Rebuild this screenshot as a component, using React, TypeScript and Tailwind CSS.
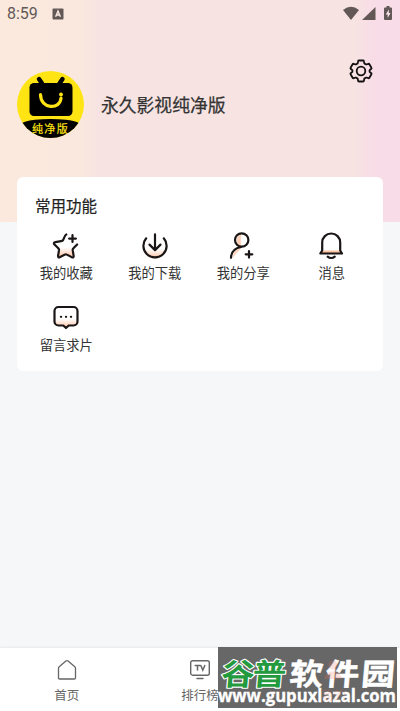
import type { ReactNode } from "react"

const ink = "#1a1616"

const StatusBar = () => (
  <div className="flex h-7 items-center justify-between pl-[7px] pr-[7px] text-[#625856]">
    <div className="flex items-center">
      <span className="w-[45px] font-['Roboto'] text-[16px] leading-7">8:59</span>
      <svg width="12" height="12" viewBox="0 0 12 12">
        <rect x="0.5" y="0.5" width="11" height="11" rx="1" fill="#625856" />
        <path d="M3.6 8.8 6 3l2.4 5.8M4.4 7h3.2" fill="none" stroke="#fbeae2" strokeWidth="1.4" />
      </svg>
    </div>
    <svg width="50" height="16" viewBox="0 0 50 16" fill="#625856">
      <path d="M0 4Q8 -2.4 16 4L8 14Z" />
      <path d="M19 14 32.5 1V14Z" />
      <path d="M43.5 0h3v1.5H48a1 1 0 0 1 1 1V13a1 1 0 0 1-1 1h-6a1 1 0 0 1-1-1V2.500a1 1 0 0 1 1-1h1.500Z" />
      <path d="M45.800 3.500 42.800 8.500h1.900V12l2.800-5h-1.700Z" fill="#fbe6ea" />
    </svg>
  </div>
)

const Avatar = () => (
  <svg width="67" height="67" viewBox="0 0 67 67">
    <defs>
      <clipPath id="avatar">
        <circle cx="33.500" cy="33.500" r="33.500" />
      </clipPath>
    </defs>
    <g clipPath="url(#avatar)">
      <rect width="67" height="67" fill="#ffe414" />
      <path d="m22 8 4 6M45.500 8l-4 6" stroke="#000" strokeWidth="4.500" strokeLinecap="round" />
      <rect x="12.500" y="12" width="43" height="33" rx="4.500" fill="#000" />
      <path d="M23.500 23.500c0 15 20 15.500 20.500 3.500" fill="none" stroke="#ffe414" strokeWidth="3.200" strokeLinecap="round" />
      <circle cx="44" cy="23.500" r="1.900" fill="#ffe414" />
      <path d="M0 54.500Q7 50 18 48.800Q33.500 47 49 48.800Q60 50 67 54.500V67H0Z" fill="#000" />
    </g>
    <text
      x="33.500"
      y="62"
      textAnchor="middle"
      fill="#ffe414"
      stroke="#ffe414"
      strokeWidth="0.200"
      className="font-['Noto_Sans_CJK_SC',sans-serif] text-[11px] tracking-[1.400px]"
    >
      纯净版
    </text>
  </svg>
)

const GearIcon = () => (
  <svg width="24" height="24" viewBox="0 0 24 24" fill="none" stroke="#151111" strokeWidth="1.800" strokeLinejoin="round">
    <path d="M9.900 1.500h4.200q.7 0 .8.700l.4 2.200 1.900 1.100 2.200-.7q.6-.2 1 .4l2 3.500q.4.600-.1 1.100L20.600 11.200v1.600l1.700 1.400q.5.500.1 1.100l-2 3.500q-.4.600-1 .4l-2.200-.7-1.900 1.100-.4 2.200q-.1.700-.8.700H9.900q-.7 0-.8-.7l-.4-2.200-1.900-1.100-2.200.7q-.6.200-1-.4l-2-3.500q-.4-.6.100-1.100l1.700-1.400v-1.600L1.700 9.800q-.5-.5-.1-1.100l2-3.500q.4-.6 1-.4l2.200.7 1.900-1.100.4-2.200q.1-.7.800-.7Z" />
    <circle cx="12" cy="12" r="4.300" />
  </svg>
)

// every function icon shares the same fading orange tint
const FeatureIcon = ({ children }: { children: ReactNode }) => (
  <svg
    width="28"
    height="28"
    viewBox="0 0 28 28"
    fill="none"
    stroke={ink}
    strokeWidth="2.200"
    strokeLinecap="round"
    strokeLinejoin="round"
  >
    <defs>
      <linearGradient id="tint" x1="0" y1="0" x2="0" y2="1">
        <stop offset="0.550" stopColor="#ffc9ad" stopOpacity="0" />
        <stop offset="1" stopColor="#ffb893" />
      </linearGradient>
    </defs>
    {children}
  </svg>
)

const StarIcon = () => (
  <FeatureIcon>
    <path
      d="M14.300 2.500c-1.500.5-2 3.200-3.200 5.500-.4.900-1 1.100-2 1.200L3.300 10.200c-1.500.2-1.800 1.300-.8 2.300l3.800 3.800c.6.6.8 1 .7 1.900l-.9 5.400c-.2 1.700.6 2.300 2 1.500l4.900-2.500c.7-.4 1.200-.4 1.900 0l4.700 2.500c1.400.8 2.300.2 2-1.500l-.9-5.400c-.1-.9 0-1.300.7-1.900l3.700-3.800"
      fill="url(#tint)"
    />
    <path d="M20.500 3.200v6.800M17.100 6.600h6.800" />
  </FeatureIcon>
)

const DownloadIcon = () => (
  <FeatureIcon>
    <path d="M7.100 4.800a12 12 0 1 0 13.800 0" fill="url(#tint)" stroke="none" />
    <path d="M5.200 6.300a11.600 11.600 0 1 0 17.600 0" />
    <path d="M14 2.300v15.400M8.500 12.600l5.500 5.500 5.500-5.500" />
  </FeatureIcon>
)

const ShareIcon = () => (
  <FeatureIcon>
    <path d="M9.400 4c-3 4-1.400 9 2.600 10.500 0-4-.5-8 .2-11.700Z" fill="#ffcfb5" stroke="none" />
    <path d="M3.500 26c.4-6 4-9.500 9.500-10.800l-6.200 7Z" fill="#ffd5bf" stroke="none" />
    <circle cx="12.700" cy="8" r="6.700" />
    <path d="M12 15C6 16 2.200 19.800 2 25.800M20 19v6.600M16.700 22.300h6.600" />
  </FeatureIcon>
)

const BellIcon = () => (
  <FeatureIcon>
    <path d="M4 18.500h18l2 3H2Z" fill="#ffc5a4" stroke="none" />
    <path d="M4.200 18.500V10.500a9 9 0 0 1 18 0v8l1.800 3H2.300ZM9.700 24.600c2 1.700 5 1.700 7 0" />
  </FeatureIcon>
)

const MessageIcon = () => (
  <FeatureIcon>
    <path
      d="M6.500 3h15a4 4 0 0 1 4 4V17.500a4 4 0 0 1-4 4h-4.800L14 24l-2.700-2.500H6.500a4 4 0 0 1-4-4V7a4 4 0 0 1 4-4Z"
      fill="url(#tint)"
    />
    <path d="M9 12.800h.1M14 12.800h.1M19 12.800h.1" strokeWidth="2.300" />
  </FeatureIcon>
)

const features = [
  { label: "我的收藏", icon: <StarIcon /> },
  { label: "我的下载", icon: <DownloadIcon /> },
  { label: "我的分享", icon: <ShareIcon /> },
  { label: "消息", icon: <BellIcon /> },
  { label: "留言求片", icon: <MessageIcon /> },
]

const HomeIcon = () => (
  <svg width="20" height="22" viewBox="0 0 20 22" fill="none" stroke="#666" strokeWidth="1.300" strokeLinejoin="round">
    <path d="M1.500 9.200c0-.6.200-1 .7-1.400l6.700-5.700c.7-.6 1.500-.6 2.200 0l6.700 5.700c.5.400.7.800.7 1.400v9.600c0 .8-.4 1.200-1.200 1.200H2.700c-.8 0-1.200-.4-1.200-1.200Z" />
  </svg>
)

const TvIcon = () => (
  <svg width="20" height="22" viewBox="0 0 20 22" fill="none" stroke="#666" strokeWidth="1.400" strokeLinecap="round">
    <rect x="0.700" y="1.700" width="18.600" height="14.500" rx="2" />
    <path d="M5.200 6.500h4.600M7.500 6.500v4.600M10.800 6.500l2 4.600 2-4.600" strokeWidth="1.500" />
    <path d="M7 19.500h6" />
  </svg>
)

const MineIcon = () => (
  <svg width="20" height="22" viewBox="0 0 20 22" fill="#ff7352">
    <circle cx="10" cy="6" r="4.500" />
    <path d="M1.500 20c0-10 17-10 17 0Z" />
  </svg>
)

const tabs = [
  { label: "首页", icon: <HomeIcon />, active: false },
  { label: "排行榜", icon: <TvIcon />, active: false },
  { label: "我的", icon: <MineIcon />, active: true },
]

const Watermark = () => (
  <div className="absolute top-[-1px] left-[218px] h-[61px] w-[179px] bg-[#676767]">
    <svg width="182" height="61" viewBox="0 0 182 61" className="overflow-visible font-['Noto_Sans_CJK_SC',sans-serif] font-bold">
      <g transform="translate(2.500 37.500) skewX(-5) scale(1.120 1)" fontSize="30">
        <text x="0" y="0" textLength="58" fill="#249a3f" stroke="#fff" strokeWidth="2.200" strokeLinejoin="round" paintOrder="stroke">
          谷普
        </text>
        <text x="61" y="0" textLength="94" fill="#fff" stroke="#fff" strokeWidth="0.500">
          软件园
        </text>
      </g>
      <text
        x="0"
        y="55"
        textLength="178"
        lengthAdjust="spacingAndGlyphs"
        fill="#fff"
        stroke="#fff"
        strokeWidth="0.300"
        className="font-['Open_Sans'] text-[18px] font-bold"
      >
        www.gupuxlazal.com
      </text>
    </svg>
  </div>
)

export default function App() {
  return (
    <div className="flex h-[711px] w-[400px] flex-col overflow-hidden bg-[#f5f7f9] font-['Noto_Sans_CJK_SC',sans-serif] text-[#333]">
      <header className="h-[222px] shrink-0 bg-[linear-gradient(90deg,#fbe9de_0px,#fae7dd_82px,#f7e4e2_97px,#f7e3e2_355px,#f8dde7_372px,#f8dde8_400px)]">
        <StatusBar />
        <div className="flex pt-[43px] pl-[17px]">
          <Avatar />
          <h1 className="ml-[17px] flex-1 text-[17.800px] leading-[67px] [-webkit-text-stroke:0.250px_#333]">
            永久影视纯净版
          </h1>
          <button className="mt-[-12px] mr-[27px] h-6">
            <GearIcon />
          </button>
        </div>
      </header>

      <main className="z-10 mx-[17px] mt-[-45px] h-[194px] shrink-0 rounded-md bg-white px-[5px] pt-[17px]">
        <h2 className="ml-[13px] text-[15.500px] leading-[22px] text-[#222] [-webkit-text-stroke:0.200px_#222]">
          常用功能
        </h2>
        <div className="mt-4 mr-0.5 grid grid-cols-4">
          {features.map((item) => (
            <div key={item.label} className="flex h-[72px] flex-col items-center">
              {item.icon}
              <span className="mt-[3px] text-[13.300px] leading-5">{item.label}</span>
            </div>
          ))}
        </div>
      </main>

      <nav className="relative mt-auto grid h-[63px] shrink-0 grid-cols-3 bg-white shadow-[0_-1px_2px_rgba(0,0,0,0.06)]">
        {tabs.map((tab) => (
          <div
            key={tab.label}
            className={
              tab.active
                ? "z-10 flex flex-col items-center pt-[11px] text-[#ff7352] opacity-20"
                : "flex flex-col items-center pt-[11px] text-[#666]"
            }
          >
            {tab.icon}
            <span className="mt-1 text-[12.500px] leading-5">{tab.label}</span>
          </div>
        ))}
        <Watermark />
      </nav>
    </div>
  )
}
